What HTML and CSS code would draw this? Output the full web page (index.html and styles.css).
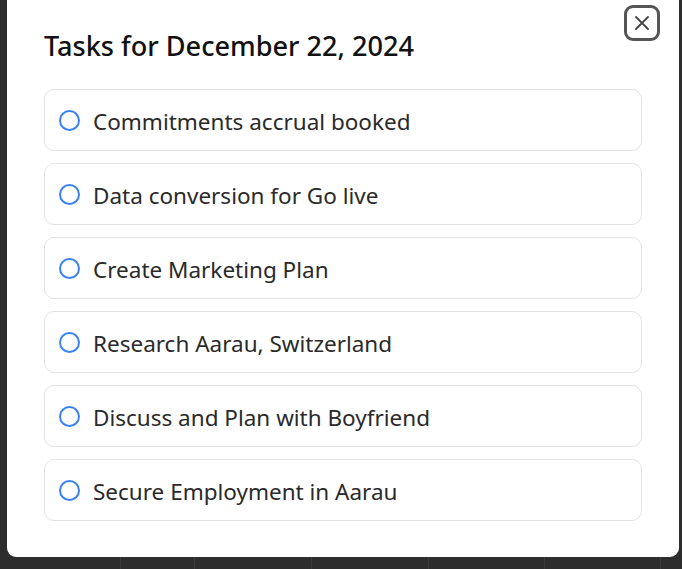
FILE: index.html
```html
<!DOCTYPE html>
<html>
<head>
<meta charset="utf-8">
<link rel="stylesheet" href="styles.css">
</head>
<body>
<div class="backdrop">
  <div class="modal">
    <button class="close" aria-label="Close">
      <svg width="18" height="18" viewBox="0 0 18 18"><path d="M3 3L15 15M15 3L3 15" stroke="#444" stroke-width="1.8" stroke-linecap="round"/></svg>
    </button>
    <h2 class="title">Tasks for December 22, 2024</h2>
    <ul class="tasks">
      <li class="task"><span class="check"></span><span class="label">Commitments accrual booked</span></li>
      <li class="task"><span class="check"></span><span class="label">Data conversion for Go live</span></li>
      <li class="task"><span class="check"></span><span class="label">Create Marketing Plan</span></li>
      <li class="task"><span class="check"></span><span class="label">Research Aarau, Switzerland</span></li>
      <li class="task"><span class="check"></span><span class="label">Discuss and Plan with Boyfriend</span></li>
      <li class="task"><span class="check"></span><span class="label">Secure Employment in Aarau</span></li>
    </ul>
  </div>
  <div class="grid-strip">
    <span class="cell c1"></span><span class="cell c2"></span><span class="cell c3"></span><span class="cell c4"></span><span class="cell c5"></span><span class="cell c6"></span><span class="cell c7"></span>
  </div>
</div>
</body>
</html>
```
FILE: styles.css
```css
html, body {
  margin: 0;
  padding: 0;
  background: #2d2d2d;
  height: 569px;
  overflow: hidden;
}
.backdrop {
  display: flex;
  flex-direction: column;
  font-family: "Noto Sans", "Open Sans", sans-serif;
}
.modal {
  position: relative;
  margin: 0 3px 0 7px;
  background: #fff;
  border-radius: 0 0 9px 9px;
  height: 557px;
  box-sizing: border-box;
  padding: 28px 37px 0 37px;
}
.close {
  position: absolute;
  top: 5px;
  left: 617px;
  width: 36px;
  height: 36px;
  border: 3px solid #555;
  border-radius: 9px;
  background: #fff;
  padding: 0;
  display: flex;
  align-items: center;
  justify-content: center;
  box-sizing: border-box;
}
.close svg { display: block; }
.title {
  margin: 0 0 25px 0;
  font-size: 27.1px;
  font-weight: 500;
  color: #111;
  line-height: 36px;
}
.tasks {
  list-style: none;
  margin: 0;
  padding: 0;
  display: flex;
  flex-direction: column;
  gap: 12px;
}
.task {
  height: 62px;
  box-sizing: border-box;
  border: 1px solid #e3e3e3;
  border-radius: 10px;
  display: flex;
  align-items: center;
  padding-left: 14px;
}
.check {
  width: 17px;
  height: 17px;
  border: 2px solid #3b82f6;
  border-radius: 50%;
  flex: none;
  margin-right: 13px;
}
.label {
  font-size: 22.5px;
  color: #2a2a2a;
  padding-top: 2px;
}
.grid-strip {
  display: flex;
  height: 12px;
}
.cell {
  border-right: 1px solid #3a3a3a;
  height: 100%;
}
.c1 { width: 120px; }
.c2 { width: 73px; }
.c3 { width: 116px; }
.c4 { width: 116px; }
.c5 { width: 115px; }
.c6 { width: 115px; }
.c7 { flex: 1; border-right: none; }
```
